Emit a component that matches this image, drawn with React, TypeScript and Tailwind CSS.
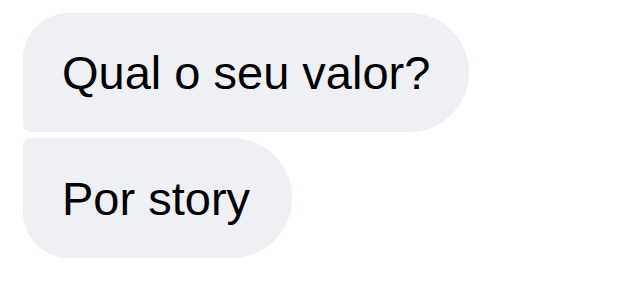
export default function App() {
  return (
    <div className="w-[644px] h-[285px] bg-white pl-[23px] pt-[13px] flex flex-col items-start gap-[6px]" style={{ fontFamily: '"Liberation Sans", Arial, sans-serif' }}>
      <div className="h-[119px] flex items-center bg-[#eff0f4] text-black text-[47px] leading-none pl-[39px] pr-[39px] rounded-tl-[46px] rounded-bl-[8px] rounded-r-[60px]">
        Qual o seu valor?
      </div>
      <div className="h-[120px] flex items-center bg-[#eff0f4] text-black text-[47px] leading-none pl-[39px] pr-[42px] rounded-tl-[8px] rounded-bl-[46px] rounded-r-[60px]">
        Por story
      </div>
    </div>
  );
}
